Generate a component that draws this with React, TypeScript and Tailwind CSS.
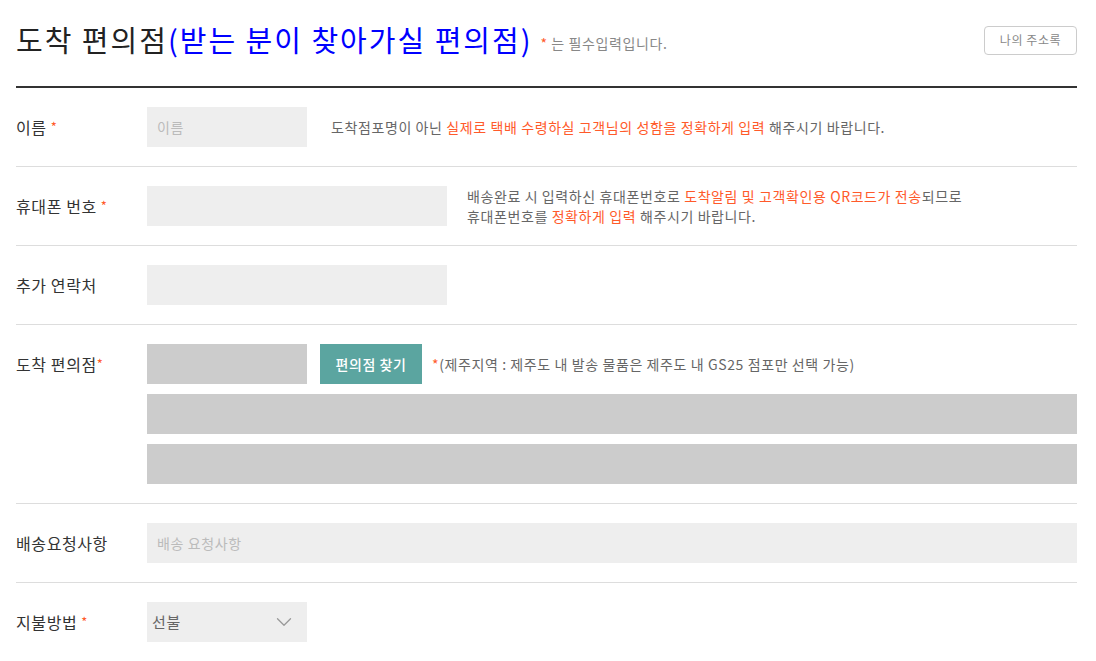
import { ChevronDown } from 'lucide-react';

const font = { fontFamily: '"Noto Sans CJK KR", "Noto Sans", sans-serif' };

const Star = ({ gap = true }: { gap?: boolean }) => (
  <span className={`text-[#ff5a2a] text-[13px] ${gap ? 'ml-1' : ''}`}>*</span>
);

const Em = ({ children }: { children: React.ReactNode }) => <span className="text-[#ff5a2a]">{children}</span>;

const Row = ({ label, children, last }: { label: React.ReactNode; children: React.ReactNode; last?: boolean }) => (
  <div className={`flex items-start py-[19px] ${last ? '' : 'border-b border-[#dddddd]'}`}>
    <div className="flex h-10 w-[131px] shrink-0 items-center text-[16px] text-[#333]">{label}</div>
    <div className="flex-1">{children}</div>
  </div>
);

export default function App() {
  return (
    <div className="min-h-screen bg-white px-4 tracking-[0.6px]" style={font}>
      <div className="w-[1061px]">
        <header className="flex h-[88px] items-center border-b-2 border-[#333] pb-[8px]">
          <h1 className="text-[29px] leading-none text-[#222] tracking-[2px]">
            도착 편의점<span className="text-[#0000ff]">(받는 분이 찾아가실 편의점)</span>
          </h1>
          <p className="ml-[8px] mt-[8px] text-[14px] text-[#888]">
            <span className="text-[#ff5a2a]">*</span> 는 필수입력입니다.
          </p>
          <button className="ml-auto mt-[2px] h-[29px] w-[93px] rounded-[4px] border border-[#cccccc] text-[12px] text-[#888]">
            나의 주소록
          </button>
        </header>

        <Row label={<>이름<Star /></>}>
          <div className="flex items-center">
            <div className="flex h-10 w-40 items-center bg-[#eeeeee] px-[10px] text-[14px] text-[#bbbbbb]">이름</div>
            <p className="ml-6 text-[14px] text-[#666]">
              도착점포명이 아닌 <Em>실제로 택배 수령하실 고객님의 성함을 정확하게 입력</Em> 해주시기 바랍니다.
            </p>
          </div>
        </Row>

        <Row label={<>휴대폰 번호<Star /></>}>
          <div className="flex items-center">
            <div className="h-10 w-[300px] bg-[#eeeeee]" />
            <p className="ml-5 text-[14px] leading-5 text-[#666]">
              배송완료 시 입력하신 휴대폰번호로 <Em>도착알림 및 고객확인용 QR코드가 전송</Em>되므로
              <br />
              휴대폰번호를 <Em>정확하게 입력</Em> 해주시기 바랍니다.
            </p>
          </div>
        </Row>

        <Row label="추가 연락처">
          <div className="h-10 w-[300px] bg-[#eeeeee]" />
        </Row>

        <Row label={<>도착 편의점<Star gap={false} /></>}>
          <div className="flex flex-col gap-[10px]">
            <div className="flex items-center">
              <div className="h-10 w-40 bg-[#cccccc]" />
              <button className="ml-[13px] h-10 w-[102px] bg-[#5ba5a0] text-[14px] font-medium text-white">편의점 찾기</button>
              <p className="ml-[10px] text-[14px] text-[#666]">
                <span className="text-[#ff5a2a]">*</span>(제주지역 : 제주도 내 발송 물품은 제주도 내 GS25 점포만 선택 가능)
              </p>
            </div>
            <div className="h-10 bg-[#cccccc]" />
            <div className="h-10 bg-[#cccccc]" />
          </div>
        </Row>

        <Row label="배송요청사항">
          <div className="flex h-10 items-center bg-[#eeeeee] px-[10px] text-[14px] text-[#bbbbbb]">배송 요청사항</div>
        </Row>

        <Row label={<>지불방법<Star /></>} last>
          <div className="flex h-10 w-40 items-center justify-between bg-[#eeeeee] pl-[5px] pr-[10px] text-[15px] text-[#666]">
            <span>선불</span>
            <ChevronDown size={26} strokeWidth={1.2} className="text-[#999]" />
          </div>
        </Row>
      </div>
    </div>
  );
}
